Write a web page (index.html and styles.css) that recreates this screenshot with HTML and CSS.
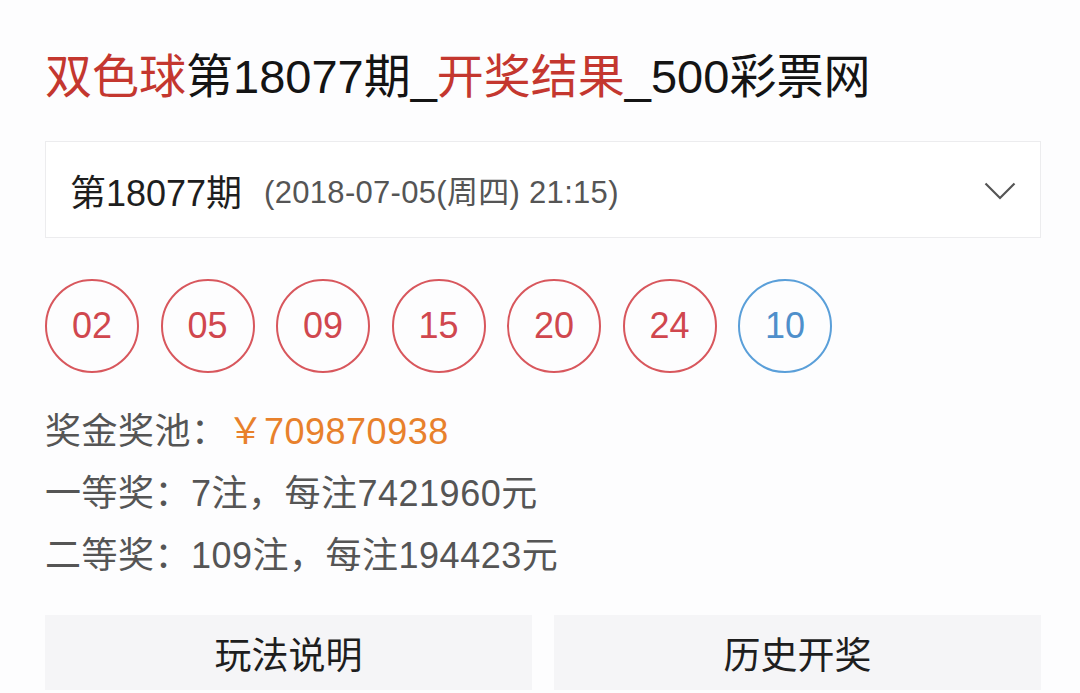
FILE: index.html
```html
<!DOCTYPE html>
<html lang="zh-CN">
<head>
<meta charset="utf-8">
<title>双色球第18077期_开奖结果_500彩票网</title>
<link rel="stylesheet" href="styles.css">
</head>
<body>
<main class="page">
  <h1 class="title"><span class="red">双色球</span>第18077期_<span class="red">开奖结果</span>_500彩票网</h1>

  <div class="select">
    <span class="issue">第18077期</span>
    <span class="date">(2018-07-05(周四) 21:15)</span>
    <svg class="chevron" width="32" height="18" viewBox="0 0 32 18"><path d="M1.5 1.5 L16 16 L30.5 1.5" fill="none" stroke="#555" stroke-width="2.2"/></svg>
  </div>

  <div class="balls">
    <span class="ball">02</span>
    <span class="ball">05</span>
    <span class="ball">09</span>
    <span class="ball">15</span>
    <span class="ball">20</span>
    <span class="ball">24</span>
    <span class="ball blue">10</span>
  </div>

  <div class="info">
    <p class="line">奖金奖池：<span class="pool">￥709870938</span></p>
    <p class="line">一等奖：7注，每注7421960元</p>
    <p class="line">二等奖：109注，每注194423元</p>
  </div>

  <div class="actions">
    <a class="btn">玩法说明</a>
    <a class="btn">历史开奖</a>
  </div>
</main>
</body>
</html>
```

FILE: styles.css
```css
* { box-sizing: border-box; }
html, body { margin: 0; padding: 0; }
body {
  background: #fdfdfe;
  font-family: "Liberation Sans", "Noto Sans CJK SC", sans-serif;
  color: #222;
  width: 1080px;
  height: 693px;
  overflow: hidden;
}
.page {
  padding: 47px 39px 0 45px;
}
.title {
  margin: 0;
  font-size: 47px;
  line-height: 60px;
  font-weight: normal;
  color: #141414;
  white-space: nowrap;
}
.red { color: #c4372f; }

.select {
  margin-top: 34px;
  height: 97px;
  border: 1px solid #ececee;
  background: #fff;
  display: flex;
  align-items: center;
  padding: 0 24px 0 24px;
}
.issue {
  font-size: 36px;
  color: #1e1e1e;
}
.date {
  margin-left: 22px;
  font-size: 31px;
  letter-spacing: 0.3px;
  color: #555;
}
.chevron {
  margin-left: auto;
  margin-top: 2px;
}

.balls {
  margin-top: 41px;
  display: flex;
  gap: 21.5px;
}
.ball {
  width: 94px;
  height: 94px;
  border-radius: 50%;
  border: 2px solid #d8575d;
  color: #d0474e;
  font-size: 36px;
  display: flex;
  align-items: center;
  justify-content: center;
}
.ball.blue {
  border-color: #5a9fd9;
  color: #4f8fcb;
}

.info {
  margin-top: 28px;
}
.line {
  margin: 0;
  font-size: 36px;
  line-height: 62px;
  letter-spacing: 0.5px;
  color: #555;
  white-space: nowrap;
}
.pool { color: #e8812c; }

.actions {
  margin-top: 28px;
  display: grid;
  grid-template-columns: 1fr 1fr;
  gap: 22px;
}
.btn {
  height: 75px;
  background: #f5f5f7;
  display: flex;
  align-items: center;
  justify-content: center;
  font-size: 37px;
  color: #1e1e1e;
}
```
